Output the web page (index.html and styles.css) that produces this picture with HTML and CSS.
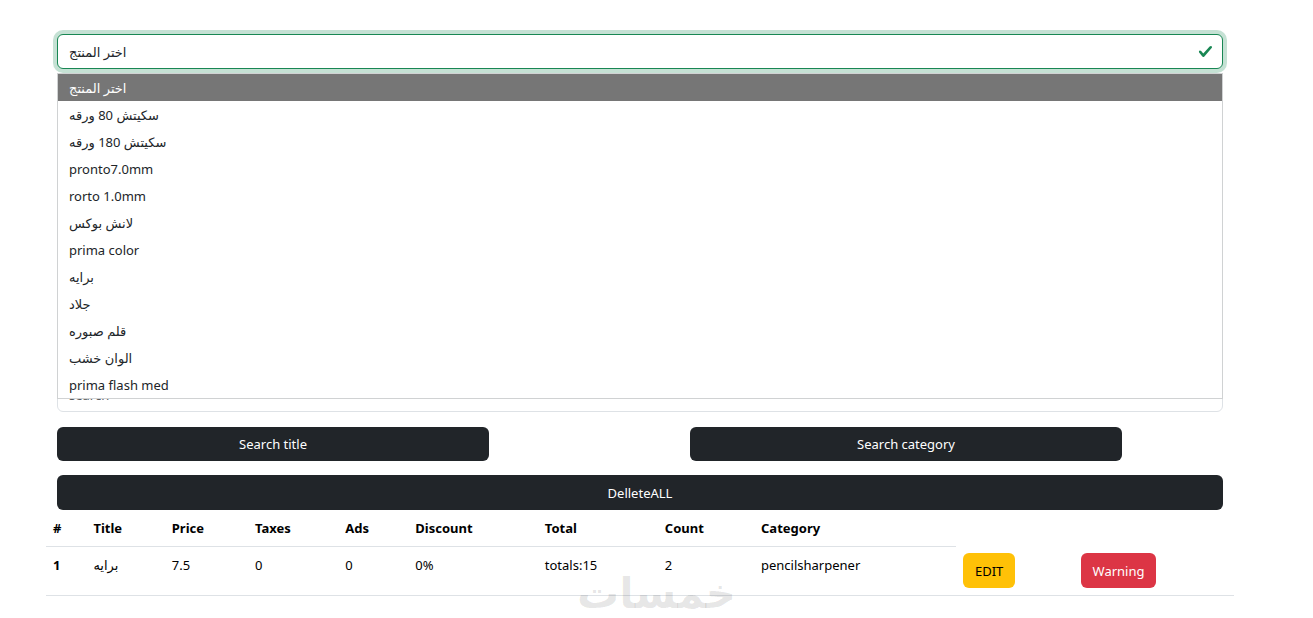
FILE: index.html
```html
<!DOCTYPE html>
<html lang="en">
<head>
    <meta charset="UTF-8">
    <meta name="viewport" content="width=device-width, initial-scale=1.0">
    <title>Products</title>
    <link rel="stylesheet" href="styles.css">
</head>
<body>
    <main class="container">
        <div class="product-picker">
            <select class="form-select is-valid" id="product" name="product" aria-label="اختر المنتج">
                <option selected>اختر المنتج</option>
            </select>
            <svg class="valid-icon" viewBox="0 0 8 8" aria-hidden="true">
                <path fill="#198754" d="M2.3 6.73.6 4.53c-.4-1.04.46-1.4 1.1-.8l1.1 1.4 3.4-3.8c.6-.63 1.6-.27 1.2.7l-4 4.6c-.43.5-.8.4-1.1.1z"/>
            </svg>
            <ul class="option-list" role="listbox" aria-label="Products">
                <li class="active" role="option" aria-selected="true">اختر المنتج</li>
                <li role="option"><bdi>سكيتش 80 ورقه</bdi></li>
                <li role="option"><bdi>سكيتش 180 ورقه</bdi></li>
                <li role="option">pronto7.0mm</li>
                <li role="option">rorto 1.0mm</li>
                <li role="option">لانش بوكس</li>
                <li role="option">prima color</li>
                <li role="option">برايه</li>
                <li role="option">جلاد</li>
                <li role="option">قلم صبوره</li>
                <li role="option">الوان خشب</li>
                <li role="option">prima flash med</li>
            </ul>
        </div>

        <input type="text" class="form-control" id="search" placeholder="search" aria-label="search">

        <div class="search-buttons">
            <button type="button" class="btn btn-dark">Search title</button>
            <button type="button" class="btn btn-dark">Search category</button>
        </div>

        <button type="button" class="btn btn-dark btn-block">DelleteALL</button>
    </main>

    <div class="table-wrap">
        <table class="table">
            <colgroup>
                <col class="col-id">
                <col class="col-title">
                <col class="col-price">
                <col class="col-taxes">
                <col class="col-ads">
                <col class="col-discount">
                <col class="col-total">
                <col class="col-count">
                <col class="col-category">
                <col class="col-edit">
                <col>
            </colgroup>
            <thead>
                <tr>
                    <th scope="col">#</th>
                    <th scope="col">Title</th>
                    <th scope="col">Price</th>
                    <th scope="col">Taxes</th>
                    <th scope="col">Ads</th>
                    <th scope="col">Discount</th>
                    <th scope="col">Total</th>
                    <th scope="col">Count</th>
                    <th scope="col">Category</th>
                </tr>
            </thead>
            <tbody>
                <tr>
                    <th scope="row">1</th>
                    <td>برايه</td>
                    <td>7.5</td>
                    <td>0</td>
                    <td>0</td>
                    <td>0%</td>
                    <td>totals:15</td>
                    <td>2</td>
                    <td>pencilsharpener</td>
                    <td class="action"><button type="button" class="btn btn-warning">EDIT</button></td>
                    <td class="action"><button type="button" class="btn btn-danger">Warning</button></td>
                </tr>
            </tbody>
        </table>
        <div class="watermark" dir="rtl">خمسات</div>
    </div>
</body>
</html>
```

FILE: styles.css
```css
* {
    box-sizing: border-box;
}
body {
    min-height: 100vh;
    margin: 0;
    padding: 34px 79px 0 46px;
    background-color: #fff;
    color: #212529;
    font-family: "Noto Sans", "DejaVu Sans", sans-serif;
    font-size: 13px;
    line-height: 22px;
}
.container {
    padding: 0 11px;
}

/* product drop-down */
.product-picker {
    position: relative;
    margin-bottom: 308px;
}
.form-select,
.form-control {
    display: block;
    width: 100%;
    height: 35px;
    padding: 5px 11px;
    border: 1px solid #dee2e6;
    border-radius: 6px;
    background-color: #fff;
    color: #212529;
    font: inherit;
    appearance: none;
}
.form-select.is-valid {
    border-color: #198754;
    box-shadow: 0 0 0 4px rgba(25, 135, 84, 0.25);
    outline: none;
}
.form-control::placeholder {
    color: #595c5f;
    opacity: 1;
}
.valid-icon {
    position: absolute;
    top: 10px;
    right: 10px;
    width: 15px;
    height: 15px;
}
.option-list {
    position: absolute;
    top: 39px;
    left: 0;
    right: 0;
    margin: 0;
    padding: 0;
    border: 1px solid #d0d2d3;
    background-color: #fff;
    list-style: none;
}
.option-list li {
    height: 27px;
    padding: 0 11px;
    line-height: 28px;
}
.option-list .active {
    background-color: #767676;
    color: #fff;
}

/* buttons */
.btn {
    height: 35px;
    padding: 5px 11px;
    border: 1px solid transparent;
    border-radius: 6px;
    font: inherit;
    cursor: pointer;
}
.btn-dark {
    background-color: #212529;
    color: #fff;
}
.btn-warning {
    background-color: #ffc107;
    color: #000;
}
.btn-danger {
    background-color: #dc3545;
    color: #fff;
}
.btn-block {
    display: block;
    width: 100%;
}
.search-buttons {
    display: flex;
    gap: 201px;
    margin: 15px 101px 14px 0;
}
.search-buttons .btn {
    flex: 1;
    height: 34px;
}

/* products table */
.table-wrap {
    position: relative;
}
.table {
    width: 100%;
    border-collapse: separate;
    border-spacing: 0;
    table-layout: fixed;
    color: #000;
}
.table th,
.table td {
    padding: 7px;
    border-bottom: 1px solid #dee2e6;
    text-align: left;
    vertical-align: top;
}
.table .action {
    padding-top: 6px;
}
.table .btn {
    display: block;
}
.col-id {
    width: 3.4%;
}
.col-title {
    width: 6.6%;
}
.col-price {
    width: 7%;
}
.col-taxes {
    width: 7.6%;
}
.col-ads {
    width: 5.9%;
}
.col-discount {
    width: 10.9%;
}
.col-total {
    width: 10.1%;
}
.col-count {
    width: 8.1%;
}
.col-category {
    width: 17%;
}
.col-edit {
    width: 9.9%;
}

.watermark {
    position: absolute;
    top: 62px;
    left: 531px;
    color: rgba(0, 0, 0, 0.1);
    font-family: "DejaVu Sans", sans-serif;
    font-size: 42px;
    font-weight: bold;
    line-height: 44px;
    white-space: nowrap;
    pointer-events: none;
}
```
